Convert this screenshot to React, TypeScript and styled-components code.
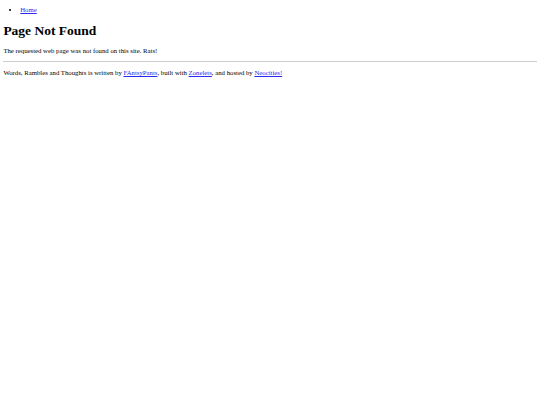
import React from 'react'
import styled, { createGlobalStyle } from 'styled-components'

const GlobalStyle = createGlobalStyle`
  html, body {
    margin: 0;
    padding: 0;
    background: #fff;
  }
`

// the reference is a 1280px wide page shown at 540px
const Page = styled.div`
  zoom: 0.421875;
  padding: 0 8px 8px;
  font-family: 'Liberation Serif', 'Times New Roman', serif;
  font-size: 16px;
  color: #000;

  a {
    color: #2a2aee;
    text-decoration: underline;
  }
`

const Nav = styled.ul`
  margin: 14px 0;
  padding-left: 40px;
  list-style: disc;
`

const Title = styled.h1`
  font-size: 32px;
  font-weight: bold;
  margin: 23px 0 21px;
`

const Text = styled.p`
  margin: 16px 0;
`

const Rule = styled.hr`
  margin: 8px 0;
  border: none;
  border-top: 2px solid #cccccc;
`

const App: React.FC = () => {
  return (
    <>
      <GlobalStyle />
      <Page>
        <Nav>
          <li>
            <a href="#">Home</a>
          </li>
        </Nav>
        <Title>Page Not Found</Title>
        <Text>The requested web page was not found on this site. Rats!</Text>
        <Rule />
        <Text>
          Words, Rambles and Thoughts is written by <a href="#">FAntsyPants</a>,
          built with <a href="#">Zonelets</a>, and hosted by{' '}
          <a href="#">Neocities!</a>
        </Text>
      </Page>
    </>
  )
}

export default App
